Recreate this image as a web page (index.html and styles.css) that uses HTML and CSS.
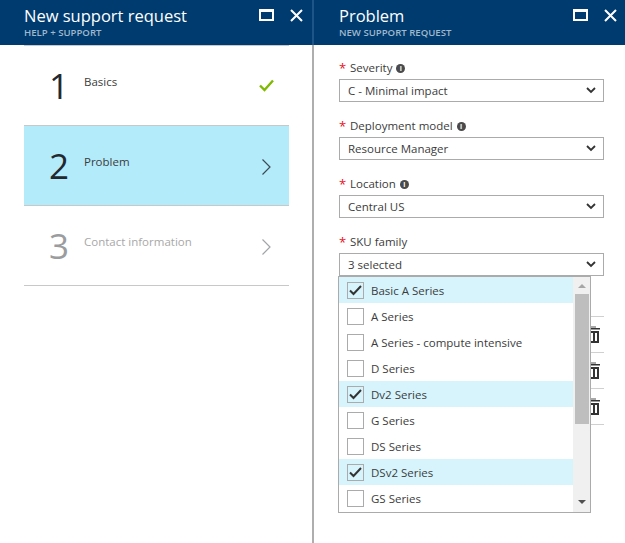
FILE: index.html
```html
<!DOCTYPE html>
<html lang="en">
<head>
  <meta charset="UTF-8">
  <title>New support request</title>
  <link rel="stylesheet" href="styles.css">
</head>
<body>
  <div class="blades">
    <section class="blade blade-left">
      <header class="blade-head">
        <div class="head-text">
          <h1>New support request</h1>
          <small>HELP + SUPPORT</small>
        </div>
        <svg class="head-icon" width="15" height="12" viewBox="0 0 15 12"><rect x="1" y="1" width="13" height="10" fill="none" stroke="#fff" stroke-width="2"/><rect x="1" y="1" width="13" height="2" fill="#fff"/></svg>
        <svg class="head-icon head-close" width="13" height="13" viewBox="0 0 13 13"><path d="M1 1l11 11M12 1L1 12" stroke="#fff" stroke-width="2" fill="none"/></svg>
      </header>
      <div class="steps">
        <div class="step">
          <span class="step-num">1</span>
          <span class="step-label">Basics</span>
          <svg class="step-icon" width="15" height="13" viewBox="0 0 15 13"><path d="M1 6.5l4.5 4.5L14 1.5" stroke="#7fba00" stroke-width="2.4" fill="none"/></svg>
        </div>
        <div class="step step-active">
          <span class="step-num">2</span>
          <span class="step-label">Problem</span>
          <svg class="step-icon" width="15" height="16" viewBox="0 0 15 16"><path d="M3.5 .5l7.5 7.5l-7.5 7.5" stroke="#3c4a54" stroke-width="1.2" fill="none"/></svg>
        </div>
        <div class="step step-off">
          <span class="step-num">3</span>
          <span class="step-label">Contact information</span>
          <svg class="step-icon" width="15" height="16" viewBox="0 0 15 16"><path d="M3.5 .5l7.5 7.5l-7.5 7.5" stroke="#a0a5a9" stroke-width="1.2" fill="none"/></svg>
        </div>
      </div>
    </section>

    <section class="blade blade-right">
      <header class="blade-head">
        <div class="head-text">
          <h1>Problem</h1>
          <small>NEW SUPPORT REQUEST</small>
        </div>
        <svg class="head-icon" width="15" height="12" viewBox="0 0 15 12"><rect x="1" y="1" width="13" height="10" fill="none" stroke="#fff" stroke-width="2"/><rect x="1" y="1" width="13" height="2" fill="#fff"/></svg>
        <svg class="head-icon head-close" width="13" height="13" viewBox="0 0 13 13"><path d="M1 1l11 11M12 1L1 12" stroke="#fff" stroke-width="2" fill="none"/></svg>
      </header>
      <div class="form">
        <div class="field">
          <div class="field-label"><span class="req">*</span>Severity<span class="info">i</span></div>
          <div class="select"><span>C - Minimal impact</span><svg class="chev" width="10" height="7" viewBox="0 0 10 7"><path d="M1 1l4 4l4-4" stroke="#333" stroke-width="1.8" fill="none"/></svg></div>
        </div>
        <div class="field">
          <div class="field-label"><span class="req">*</span>Deployment model<span class="info">i</span></div>
          <div class="select"><span>Resource Manager</span><svg class="chev" width="10" height="7" viewBox="0 0 10 7"><path d="M1 1l4 4l4-4" stroke="#333" stroke-width="1.8" fill="none"/></svg></div>
        </div>
        <div class="field">
          <div class="field-label"><span class="req">*</span>Location<span class="info">i</span></div>
          <div class="select"><span>Central US</span><svg class="chev" width="10" height="7" viewBox="0 0 10 7"><path d="M1 1l4 4l4-4" stroke="#333" stroke-width="1.8" fill="none"/></svg></div>
        </div>
        <div class="field">
          <div class="field-label"><span class="req">*</span>SKU family</div>
          <div class="select"><span>3 selected</span><svg class="chev" width="10" height="7" viewBox="0 0 10 7"><path d="M1 1l4 4l4-4" stroke="#333" stroke-width="1.8" fill="none"/></svg></div>
        </div>

        <div class="behind">
          <div class="behind-row"><svg width="12" height="17" viewBox="0 0 12 17"><path d="M3 0h5v2H3z" fill="#a8a8a8"/><path d="M0 2h12v1.5H0z" fill="#333"/><path d="M2 6h8v10H2zM6 6v10" stroke="#333" stroke-width="2" fill="none"/></svg></div>
          <div class="behind-row"><svg width="12" height="17" viewBox="0 0 12 17"><path d="M3 0h5v2H3z" fill="#a8a8a8"/><path d="M0 2h12v1.5H0z" fill="#333"/><path d="M2 6h8v10H2zM6 6v10" stroke="#333" stroke-width="2" fill="none"/></svg></div>
          <div class="behind-row"><svg width="12" height="17" viewBox="0 0 12 17"><path d="M3 0h5v2H3z" fill="#a8a8a8"/><path d="M0 2h12v1.5H0z" fill="#333"/><path d="M2 6h8v10H2zM6 6v10" stroke="#333" stroke-width="2" fill="none"/></svg></div>
        </div>

        <div class="dropdown">
          <ul class="options">
            <li class="option checked"><span class="box"><svg width="13" height="11" viewBox="0 0 13 11"><path d="M1 5.5l3.5 3.5L12 1" stroke="#333" stroke-width="2" fill="none"/></svg></span>Basic A Series</li>
            <li class="option"><span class="box"></span>A Series</li>
            <li class="option"><span class="box"></span>A Series - compute intensive</li>
            <li class="option"><span class="box"></span>D Series</li>
            <li class="option checked"><span class="box"><svg width="13" height="11" viewBox="0 0 13 11"><path d="M1 5.5l3.5 3.5L12 1" stroke="#333" stroke-width="2" fill="none"/></svg></span>Dv2 Series</li>
            <li class="option"><span class="box"></span>G Series</li>
            <li class="option"><span class="box"></span>DS Series</li>
            <li class="option checked"><span class="box"><svg width="13" height="11" viewBox="0 0 13 11"><path d="M1 5.5l3.5 3.5L12 1" stroke="#333" stroke-width="2" fill="none"/></svg></span>DSv2 Series</li>
            <li class="option"><span class="box"></span>GS Series</li>
          </ul>
          <div class="scrollbar">
            <span class="arrow-up"></span>
            <span class="thumb"></span>
            <span class="arrow-down"></span>
          </div>
        </div>
      </div>
    </section>
  </div>
</body>
</html>
```

FILE: styles.css
```css
html, body {
  margin: 0;
  padding: 0;
  height: 543px;
  overflow: hidden;
  background: #fff;
}
body {
  font-family: "Open Sans", "Noto Sans", Arial, sans-serif;
  color: #3c3c3c;
}
.blades {
  display: flex;
  height: 543px;
}
.blade-left {
  width: 312px;
  flex: none;
}
.blade-right {
  flex: 1;
  border-left: 2px solid #aeaeae;
}
.blade-head {
  height: 45px;
  background: #003b6f;
  display: flex;
  align-items: flex-start;
  color: #fff;
  padding-left: 24px;
  padding-right: 9px;
  box-sizing: border-box;
}
.blade-right .blade-head {
  margin-left: -2px;
  border-left: 2px solid #1f5486;
  padding-left: 25px;
  padding-right: 8px;
}
.head-text {
  flex: 1;
}
h1 {
  margin: 5px 0 0;
  font-size: 16.5px;
  line-height: 22px;
  font-weight: 400;
}
small {
  display: block;
  font-size: 9.6px;
  line-height: 12px;
  font-weight: 600;
  color: #9fb8cd;
}
.head-icon {
  margin-top: 9px;
  flex: none;
}
.head-close {
  margin-left: 16px;
}
.steps {
  margin: 0 23px 0 24px;
  border-top: 1px solid #c8c8c8;
}
.step {
  height: 79px;
  border-bottom: 1px solid #c8c8c8;
  display: flex;
  align-items: flex-start;
}
.step-active {
  background: #b3ebfb;
}
.step-num {
  width: 45px;
  margin-right: 15px;
  margin-top: 17px;
  text-align: right;
  font-size: 35px;
  line-height: 46px;
  color: #23282e;
}
.step-label {
  flex: 1;
  font-size: 11.5px;
  line-height: 16px;
  margin-top: 28px;
}
.step-icon {
  margin: 33px 15px 0 0;
}
.step-off .step-num {
  color: #9a9c9e;
}
.step-off .step-label {
  color: #a8a8a8;
}
.form {
  padding: 14px 21px 0 25px;
  position: relative;
}
.field {
  height: 58px;
}
.field-label {
  font-size: 11.5px;
  line-height: 18px;
  display: flex;
  align-items: center;
}
.req {
  color: #e81123;
  width: 11px;
  font-size: 13px;
  line-height: 14px;
}
.info {
  width: 9px;
  height: 9px;
  margin-left: 4px;
  border-radius: 50%;
  background: #4a4a4a;
  color: #fff;
  font-size: 7px;
  line-height: 9px;
  font-weight: 700;
  text-align: center;
}
.select {
  height: 23px;
  margin-top: 2px;
  border: 1px solid #ababab;
  box-sizing: border-box;
  display: flex;
  align-items: center;
  justify-content: space-between;
  padding: 0 7px 0 8px;
  font-size: 11.5px;
}
.behind {
  margin-top: 25px;
  border-top: 1px solid #d0d0d0;
}
.behind-row {
  height: 35px;
  border-bottom: 1px solid #d0d0d0;
  display: flex;
  align-items: center;
  justify-content: flex-end;
  padding-right: 4px;
}
.dropdown {
  position: absolute;
  left: 24px;
  top: 231px;
  width: 251px;
  height: 235px;
  border: 1px solid #ababab;
  background: #fff;
  display: flex;
  overflow: hidden;
}
.options {
  list-style: none;
  margin: 0;
  padding: 0;
  flex: 1;
}
.option {
  height: 26px;
  display: flex;
  align-items: center;
  padding-left: 8px;
  font-size: 11.5px;
}
.option.checked {
  background: #d7f4fd;
}
.box {
  width: 17px;
  height: 17px;
  box-sizing: border-box;
  border: 1px solid #ababab;
  margin-right: 7px;
  display: flex;
  align-items: center;
  justify-content: center;
}
.scrollbar {
  width: 17px;
  background: #f0f0f0;
  display: flex;
  flex-direction: column;
  align-items: center;
}
.arrow-up, .arrow-down {
  width: 0;
  height: 0;
  border-left: 4px solid transparent;
  border-right: 4px solid transparent;
}
.arrow-up {
  margin-top: 7px;
  border-bottom: 4px solid #a6a6a6;
}
.thumb {
  width: 14px;
  height: 130px;
  margin-top: 6px;
  background: #bebebe;
}
.arrow-down {
  margin-top: 76px;
  border-top: 4px solid #505050;
}
```
